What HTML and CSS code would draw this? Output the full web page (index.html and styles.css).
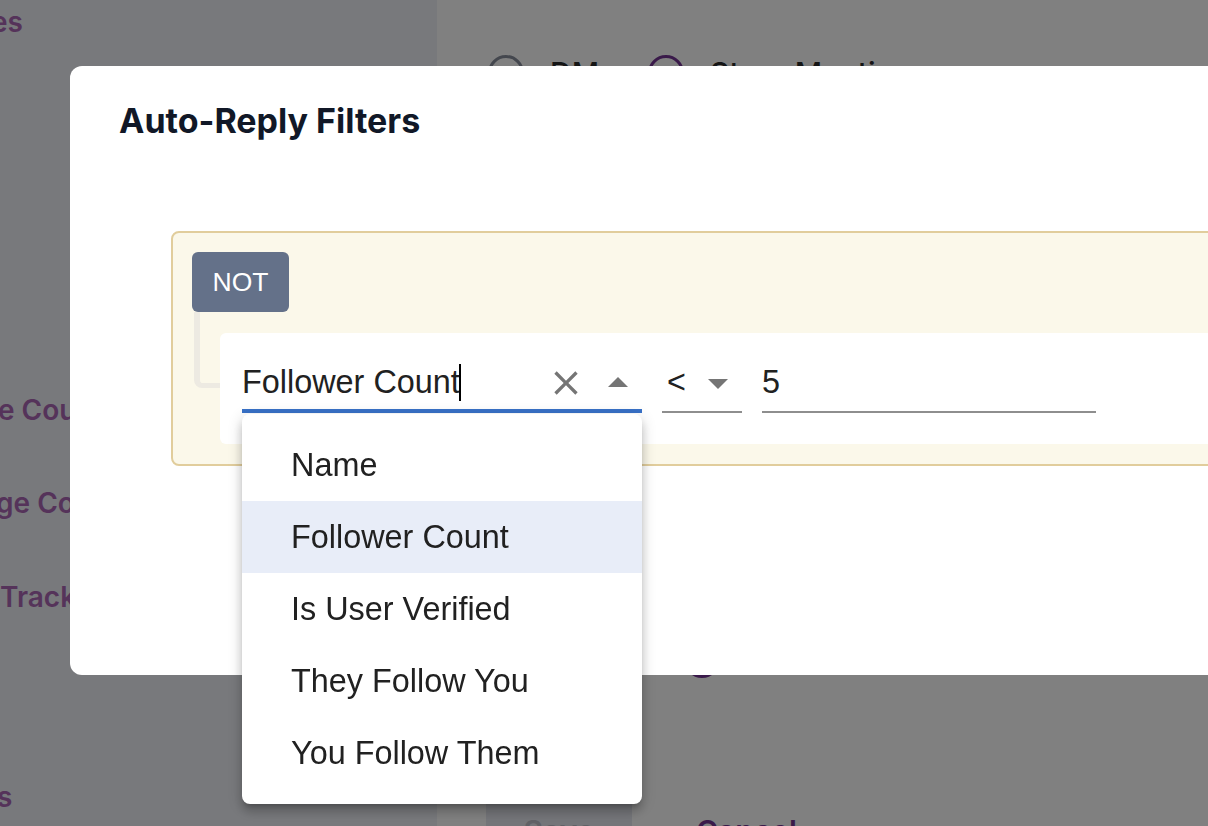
FILE: index.html
```html
<!DOCTYPE html>
<html lang="en">
<head>
<meta charset="utf-8">
<title>Auto-Reply Filters</title>
<link rel="stylesheet" href="styles.css">
</head>
<body>
<div class="app">
  <aside class="sidebar">
    <nav class="nav">
      <div class="nav-item nav-top">es</div>
      <div class="nav-item nav-a">e Count</div>
      <div class="nav-item nav-b">ge Count</div>
      <div class="nav-item nav-c">Tracking</div>
      <div class="nav-item nav-d">s</div>
    </nav>
  </aside>
  <main class="main">
    <div class="radio-row">
      <span class="radio radio-grey"></span>
      <span class="radio-label label-dm">DM</span>
      <span class="radio radio-purple"></span>
      <span class="radio-label">Story Mentions</span>
    </div>
    <div class="radio-row second-row">
      <span class="radio radio-purple"></span>
    </div>
    <div class="actions">
      <button class="btn-save">Save</button>
      <button class="btn-cancel">Cancel</button>
    </div>
  </main>
</div>

<div class="modal">
  <h2 class="modal-title">Auto-Reply Filters</h2>
  <div class="group">
    <button class="not-btn">NOT</button>
    <div class="children">
      <div class="rule">
        <div class="field field-focused">
          <span class="field-text">Follower Count<span class="caret"></span></span>
          <svg class="icon-clear" viewBox="0 0 24 24" width="40" height="40"><path d="M19 6.41 17.59 5 12 10.59 6.41 5 5 6.41 10.59 12 5 17.59 6.41 19 12 13.41 17.59 19 19 17.59 13.41 12z"/></svg>
          <svg class="icon-arrow" viewBox="0 0 24 24" width="48" height="48"><path d="M7 14l5-5 5 5z"/></svg>
          <ul class="menu">
            <li class="menu-item">Name</li>
            <li class="menu-item active">Follower Count</li>
            <li class="menu-item">Is User Verified</li>
            <li class="menu-item">They Follow You</li>
            <li class="menu-item">You Follow Them</li>
          </ul>
        </div>
        <div class="field field-op">
          <span class="field-text op-text">&lt;</span>
          <svg class="icon-arrow" viewBox="0 0 24 24" width="48" height="48"><path d="M7 10l5 5 5-5z"/></svg>
        </div>
        <div class="field field-value">
          <span class="field-text">5</span>
        </div>
      </div>
    </div>
  </div>
</div>
</body>
</html>
```

FILE: styles.css
```css
html, body {
  margin: 0;
  padding: 0;
  overflow: hidden;
  width: 1208px;
  height: 826px;
}

body {
  background: #808080;
  font-family: "Liberation Sans", Arial, sans-serif;
}

.app {
  display: flex;
  height: 826px;
}

/* ---------- background page (dimmed) ---------- */
.sidebar {
  width: 437px;
  flex-shrink: 0;
  background: #78797c;
  overflow: hidden;
}

.nav {
  display: flex;
  flex-direction: column;
  padding-top: 5px;
}

.nav-item {
  font-family: Inter, "Noto Sans", sans-serif;
  font-weight: 600;
  font-size: 28px;
  line-height: 34px;
  color: #55335a;
  white-space: nowrap;
  margin-left: -2px;
}

.nav-top { margin-left: -9px; }
.nav-a { margin-top: 354px; }
.nav-b { margin-top: 59px; margin-left: -4px; }
.nav-c { margin-top: 60px; margin-left: 0; }
.nav-d { margin-top: 166px; margin-left: -3px; }

.main {
  flex: 1;
  background: #808080;
  padding-left: 51px;
  display: flex;
  flex-direction: column;
}

.radio-row {
  display: flex;
  align-items: center;
  margin-top: 55px;
}

.radio {
  width: 36px;
  height: 36px;
  box-sizing: border-box;
  border-radius: 50%;
  border: 3px solid #44474e;
  flex-shrink: 0;
}

.radio-purple {
  border-color: #3a1a4a;
}

.radio-label {
  font-family: Inter, "Noto Sans", sans-serif;
  font-weight: 500;
  font-size: 30px;
  color: #151515;
  margin-left: 26px;
  margin-right: 49px;
}

.second-row {
  margin-top: 551px;
  padding-left: 196px;
}

.actions {
  display: flex;
  align-items: flex-start;
  margin-top: 120px;
}

.btn-save {
  width: 146px;
  height: 60px;
  border: none;
  border-radius: 6px;
  background: #747579;
  color: #606166;
  font-family: Inter, "Noto Sans", sans-serif;
  font-weight: 600;
  font-size: 30px;
  padding-top: 6px;
  margin-left: -2px;
}

.btn-cancel {
  border: none;
  background: transparent;
  color: #3a1a4a;
  font-family: Inter, "Noto Sans", sans-serif;
  font-weight: 600;
  font-size: 30px;
  margin-left: 64px;
  padding: 6px 0 0;
  height: 60px;
}

/* ---------- modal ---------- */
.modal {
  position: fixed;
  left: 70px;
  top: 66px;
  width: 1200px;
  height: 609px;
  box-sizing: border-box;
  background: #fff;
  border-radius: 12px;
  padding: 35px 0 0 49px;
}

.modal-title {
  margin: 0;
  font-family: Inter, "Noto Sans", sans-serif;
  font-weight: 700;
  font-size: 34px;
  line-height: 40px;
  color: #111827;
}

.group {
  margin-top: 90px;
  margin-left: 52px;
  border: 2px solid #e1cd9c;
  border-radius: 8px;
  background: #fbf8ea;
  padding: 19px 0 20px 19px;
}

.not-btn {
  display: block;
  width: 97px;
  height: 60px;
  border: none;
  border-radius: 6px;
  background: #647189;
  color: #fff;
  font-family: "Liberation Sans", Arial, sans-serif;
  font-size: 26.5px;
  padding: 0;
}

.children {
  position: relative;
  margin-top: 21px;
  padding-left: 28px;
}

.children::before {
  content: "";
  position: absolute;
  left: 2px;
  top: -21px;
  width: 26px;
  height: 76px;
  box-sizing: border-box;
  border-left: 6px solid #edeae2;
  border-bottom: 5px solid #edeae2;
  border-bottom-left-radius: 8px;
}

.rule {
  position: relative;
  background: #fff;
  border-radius: 6px;
  padding: 31px 0 31px 22px;
  display: flex;
  align-items: flex-end;
  gap: 20px;
}

.field {
  position: relative;
  display: flex;
  align-items: center;
  border-bottom: 2px solid #8e8e8e;
  padding-bottom: 10px;
}

.field-focused {
  width: 400px;
  border-bottom: 4px solid #3871c7;
  padding-bottom: 8px;
}

.field-op { width: 80px; }
.field-value { width: 334px; }

.field-text {
  flex: 1;
  font-size: 32.4px;
  line-height: 37px;
  color: #212121;
  white-space: nowrap;
}

.op-text {
  padding-left: 5px;
}

.caret {
  display: inline-block;
  width: 2px;
  height: 37px;
  background: #000;
  vertical-align: top;
  margin-left: -1px;
}

.icon-clear {
  fill: #757575;
  margin: -2px 0;
}

.icon-arrow {
  fill: #757575;
  margin: -6px 0;
}

.icon-clear + .icon-arrow {
  margin-left: 8px;
}

/* ---------- dropdown ---------- */
.menu {
  position: absolute;
  left: 0;
  top: calc(100% + 5px);
  width: 400px;
  margin: 0;
  padding: 15px 0;
  list-style: none;
  background: #fff;
  border-radius: 8px;
  box-shadow: 0 5px 5px -3px rgba(0,0,0,0.2), 0 8px 10px 1px rgba(0,0,0,0.14), 0 3px 14px 2px rgba(0,0,0,0.12);
  z-index: 5;
}

.menu-item {
  height: 72px;
  line-height: 72px;
  padding-left: 49px;
  font-size: 32.4px;
  color: #212121;
  white-space: nowrap;
}

.menu-item.active {
  background: #e8edf8;
}
```
